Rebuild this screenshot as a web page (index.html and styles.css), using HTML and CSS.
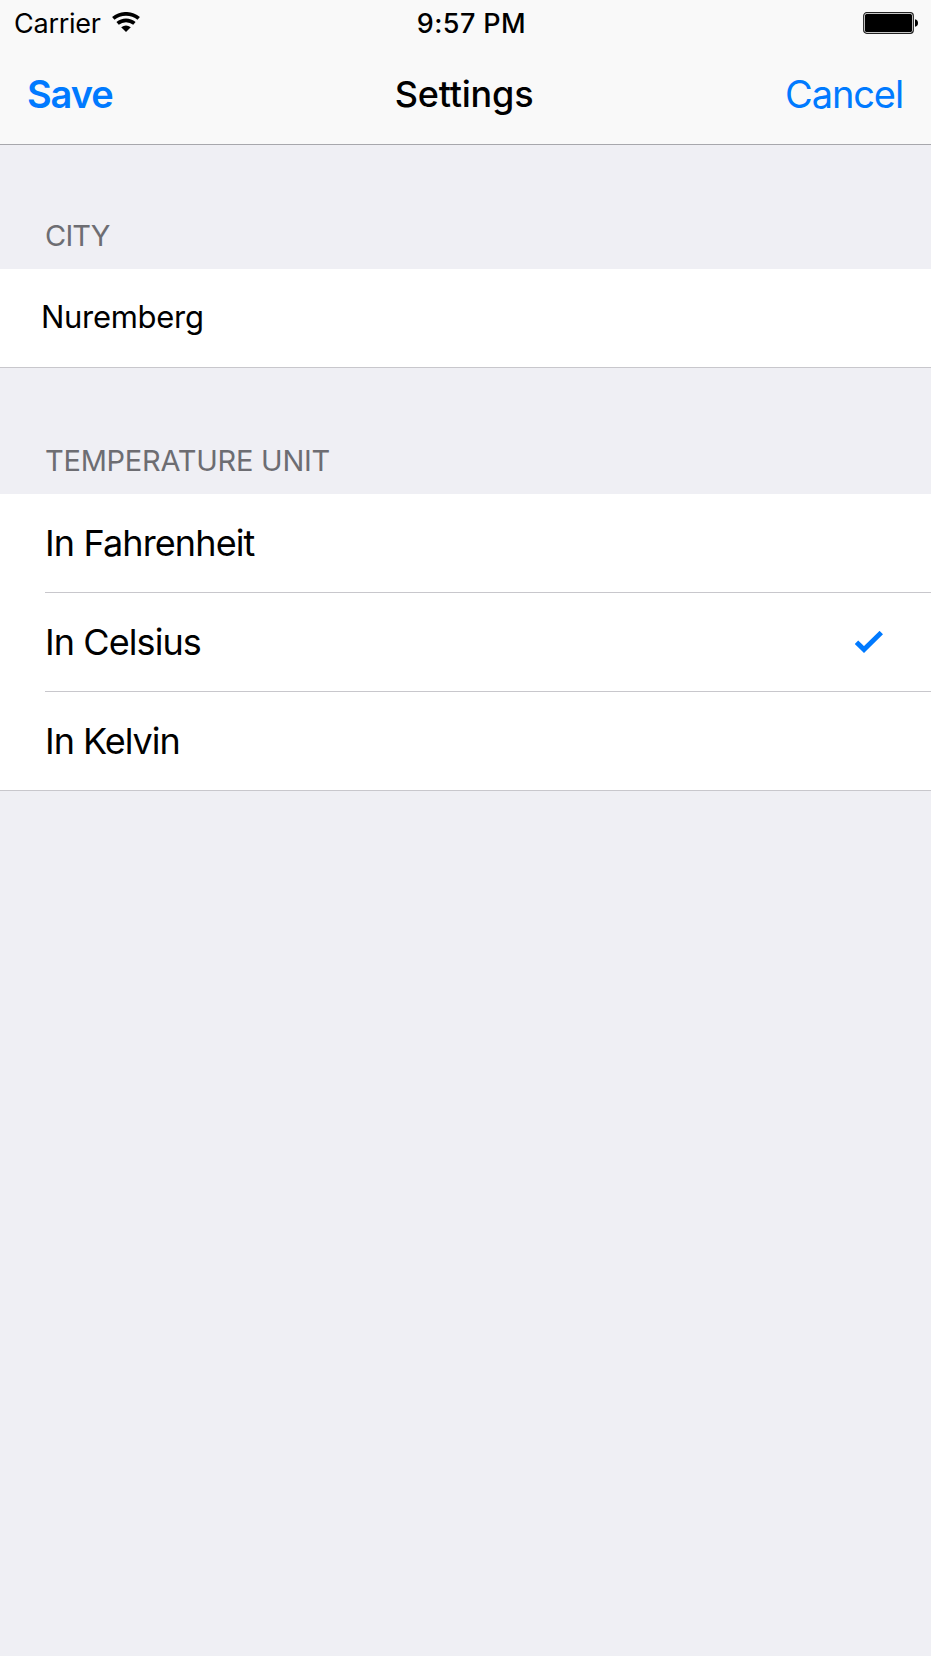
FILE: index.html
```html
<!DOCTYPE html>
<html lang="en">
<head>
<meta charset="utf-8">
<title>Settings</title>
<link rel="stylesheet" href="styles.css">
</head>
<body>
<header class="top">
  <div class="status">
    <div class="carrier"><span>Carrier</span>
      <svg class="wifi" viewBox="0 0 28 20" width="28" height="20"><g fill="none" stroke="#000" stroke-width="3.7"><path d="M1.300 6.400C8.500 .3 19.500 .3 26.700 6.400"/><path d="M5.600 11.400C10.500 7.300 17.500 7.300 22.400 11.400"/></g><path d="M9.200 15.300Q14 11.600 18.800 15.300L14 20Z"/></svg>
    </div>
    <time class="clock">9:57 PM</time>
    <svg class="battery" viewBox="0 0 56 22" width="56" height="22"><rect x=".7" y=".7" width="49.600" height="20.600" rx="3" fill="#fff" stroke="#222" stroke-width="1.200"/><rect x="2" y="2" width="47" height="18" rx="1.500"/><path d="M52 7.200c2 .3 3 1.800 3 3.800s-1 3.500-3 3.800z"/></svg>
  </div>
  <nav class="nav"><a class="save">Save</a><h1 class="title">Settings</h1><a class="cancel">Cancel</a></nav>
</header>
<main>
  <h2 class="heading city-heading">CITY</h2>
  <div class="field"><span>Nuremberg</span></div>
  <h2 class="heading unit-heading">TEMPERATURE UNIT</h2>
  <ul class="list">
    <li><span class="fahrenheit">In Fahrenheit</span></li>
    <li><span class="celsius">In Celsius</span><svg class="check" viewBox="0 0 28 22" width="28" height="22"><path d="M1.500 11.200L9 18.500L26.300 1.600" fill="none" stroke="#007aff" stroke-width="4.900"/></svg></li>
    <li><span class="kelvin">In Kelvin</span></li>
  </ul>
</main>
</body>
</html>
```
FILE: styles.css
```css
* { box-sizing: border-box; }
body { margin: 0; min-height: 1656px; background: #efeff4; color: #000; font-family: Inter, "Liberation Sans", sans-serif; }
h1, h2, ul { margin: 0; padding: 0; font-weight: 400; }
.top { height: 145px; background: #f9f9f9; border-bottom: 1px solid #a7a7ac; }
.status { display: grid; grid-template-columns: 1fr auto 1fr; height: 46px; padding: 0 12px 0 14px; align-items: center; font-size: 27px; line-height: 46px; }
.carrier { display: flex; gap: 11px; align-items: center; letter-spacing: -0.25px; }
.carrier span, .clock { padding-top: 2px; line-height: 44px; }
.wifi { margin-top: -2px; }
.clock { margin-left: 10px; font-weight: 550; letter-spacing: 0.4px; }
.battery { justify-self: end; }
.nav { display: grid; grid-template-columns: 1fr auto 1fr; padding: 0 28px 0 27px; height: 96px; align-items: center; color: #007aff; font-size: 38px; }
.save { font-weight: 600; letter-spacing: -1.1px; }
.title { margin-right: 2px; color: #000; font-weight: 500; font-size: 36px; letter-spacing: -0.2px; }
.cancel { justify-self: end; letter-spacing: -1.1px; }
.heading { height: 124px; padding: 73px 0 0 45px; font-size: 29px; line-height: 35px; color: #6d6d72; letter-spacing: -0.25px; }
.city-heading { letter-spacing: -0.8px; }
.field { height: 99px; background: #fff; border-bottom: 1px solid #c8c7cc; padding-left: 41px; font-size: 31px; line-height: 95px; letter-spacing: -0.3px; }
.unit-heading { height: 126px; padding-top: 75px; }
.list { list-style: none; background: #fff; border-bottom: 1px solid #c8c7cc; font-size: 36px; letter-spacing: -0.92px; }
.list li { display: flex; justify-content: space-between; align-items: center; height: 99px; margin-left: 45px; padding-right: 48px; border-bottom: 1px solid #c8c7cc; }
.list li:last-child { border: 0; height: 98px; }
.fahrenheit { letter-spacing: -0.88px; }
.kelvin { letter-spacing: -1.02px; }
```
